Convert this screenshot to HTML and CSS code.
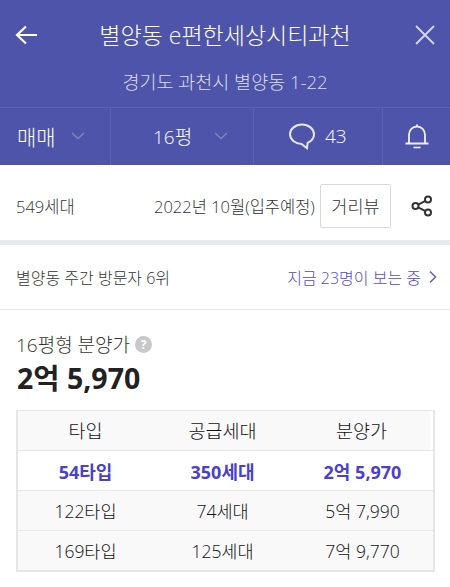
FILE: index.html
```html
<!DOCTYPE html>
<html lang="ko">
<head>
<meta charset="utf-8">
<title>별양동 e편한세상시티과천</title>
<link rel="stylesheet" href="styles.css">
</head>
<body>
<header class="hero">
  <div class="title-row">
    <svg class="ico-back" width="24" height="20" viewBox="0 0 24 20"><path d="M22 10H2M11 1.500L2 10l9 8.500" fill="none" stroke="#fff" stroke-width="2.200"/></svg>
    <h1 class="title">별양동 e편한세상시티과천</h1>
    <svg class="ico-close" width="20" height="20" viewBox="0 0 20 20"><path d="M1 1l18 18M19 1L1 19" fill="none" stroke="#d5d7ec" stroke-width="1.800"/></svg>
  </div>
  <p class="address">경기도 과천시 별양동 1-22</p>
  <nav class="tabs">
    <div class="tab tab-deal"><span>매매</span><svg class="chev" width="14" height="8" viewBox="0 0 14 8"><path d="M1 1l6 5.500L13 1" fill="none" stroke="#7f84c4" stroke-width="1.500"/></svg></div>
    <div class="tab tab-size"><span>16평</span><svg class="chev" width="14" height="8" viewBox="0 0 14 8"><path d="M1 1l6 5.500L13 1" fill="none" stroke="#7f84c4" stroke-width="1.500"/></svg></div>
    <div class="tab tab-talk"><svg width="28" height="28" viewBox="0 0 28 28"><path d="M14 2.500C7.400 2.500 2 6.900 2 12.300c0 5.300 5 9.400 11.500 9.600l5.500 4.300.6-5.300c3.600-1.700 6.400-4.800 6.400-8.600C26 6.900 20.600 2.500 14 2.500z" fill="none" stroke="#e6e7f5" stroke-width="2"/></svg><span>43</span></div>
    <div class="tab tab-bell"><svg width="26" height="28" viewBox="0 0 26 28"><path d="M13 2.500v2M5 21V13c0-4.800 3.500-8.500 8-8.500s8 3.700 8 8.500v8M1.500 21.500h23" fill="none" stroke="#f0f0fa" stroke-width="1.800"/><path d="M9.500 25.500h7" stroke="#f0f0fa" stroke-width="1.600"/></svg></div>
  </nav>
</header>
<section class="info">
  <span class="households">549세대</span>
  <span class="move-in">2022년 10월(입주예정)</span>
  <button class="road">거리뷰</button>
  <svg class="share" width="22" height="22" viewBox="0 0 22 22"><g fill="none" stroke="#333" stroke-width="2"><circle cx="17" cy="4.500" r="3"/><circle cx="4.500" cy="11" r="3"/><circle cx="17" cy="17.500" r="3"/><path d="M7.200 9.600l7.200-3.700M7.200 12.400l7.200 3.700"/></g></svg>
</section>
<section class="rank">
  <span class="rank-text">별양동 주간 방문자 6위</span>
  <span class="rank-link">지금 23명이 보는 중<svg width="8" height="14" viewBox="0 0 8 14"><path d="M1 1.500l5.500 5.500L1 12.500" fill="none" stroke="#5a55d6" stroke-width="1.400"/></svg></span>
</section>
<section class="price">
  <div class="price-label">16평형 분양가<span class="help">?</span></div>
  <div class="price-value">2억 5,970</div>
  <div class="grid">
    <div class="row row-head"><span>타입</span><span>공급세대</span><span>분양가</span></div>
    <div class="row row-on"><span>54타입</span><span>350세대</span><span>2억 5,970</span></div>
    <div class="row"><span>122타입</span><span>74세대</span><span>5억 7,990</span></div>
    <div class="row"><span>169타입</span><span>125세대</span><span>7억 9,770</span></div>
  </div>
</section>
</body>
</html>
```
FILE: styles.css
```css
* { box-sizing: border-box; }
html, body { margin: 0; padding: 0; }
body {
  width: 450px;
  height: 587px;
  overflow: hidden;
  background: #fff;
  color: #333;
  font-family: "Open Sans", "Noto Sans CJK KR", sans-serif;
  font-weight: 300;
}
.hero { background: #4e54a9; color: #fff; height: 165px; display: flex; flex-direction: column; }
.title-row { height: 70px; display: grid; grid-template-columns: 1fr auto 1fr; align-items: center; padding: 0 15px; }
.title { margin: 0; font-size: 23px; font-weight: 300; line-height: 30px; }
.ico-close { justify-self: end; }
.address { margin: 0; height: 37px; text-align: center; font-size: 18.500px; line-height: 24px; color: #dcdef2; }
.tabs { flex: 1; display: flex; border-top: 1px solid #5b62b2; }
.tab { display: flex; align-items: center; border-right: 1px solid #5b62b2; padding-bottom: 2px; }
.tab-deal { width: 111px; padding-left: 17px; gap: 15px; font-size: 21px; }
.tab-size { width: 143px; padding-left: 42px; gap: 22px; font-size: 19px; }
.tab-talk { width: 129px; padding-left: 34px; gap: 9px; font-size: 19px; }
.tab-bell { flex: 1; border-right: 0; justify-content: center; }
.info { height: 75px; display: flex; align-items: center; padding: 6px 16px 0; font-size: 16.500px; color: #333; }
.households { width: 138px; }
.move-in { width: 166px; white-space: nowrap; }
.road { width: 71px; height: 44px; padding: 0; background: #fff; border: 1px solid #d8d8d8; border-radius: 2px; font: inherit; font-size: 17.500px; color: #333; }
.share { margin-left: 20px; }
.rank { height: 70px; display: flex; align-items: center; justify-content: space-between; padding: 0 13px 0 16px; border-top: 5px solid #e8e9eb; border-bottom: 1px solid #e4e4e4; font-size: 16px; }
.rank-text { color: #333; }
.rank-link { display: flex; align-items: center; gap: 8px; color: #4f49d2; }
.price { padding: 21px 15px 0 16px; }
.price-label { display: flex; align-items: center; gap: 5px; height: 26px; font-size: 19px; color: #333; }
.help { width: 17px; height: 17px; border-radius: 50%; background: #c8c8c8; color: #fff; font-size: 12px; font-weight: 700; line-height: 17px; text-align: center; }
.price-value { margin-top: 4px; padding-left: 1px; height: 34px; font-size: 28.500px; line-height: 34px; font-weight: 700; color: #222; }
.grid { margin-top: 15px; border: 2px solid #e6e6e6; border-width: 1px 2px 2px 2px; width: 419px; }
.row { height: 40px; display: grid; grid-template-columns: 135px 139px 1fr; align-items: center; text-align: center; background: #f9f9f9; border-top: 1px solid #e6e6e6; font-size: 17.500px; color: #111; }
.row:first-child { border-top: 0; height: 39px; }
.row-head { margin-right: 3px; font-size: 18.500px; padding-bottom: 2px; grid-template-columns: 135px 139px 139px; }
.row-on { background: #fff; color: #4a3fd0; font-weight: 700; font-size: 18px; }
```
